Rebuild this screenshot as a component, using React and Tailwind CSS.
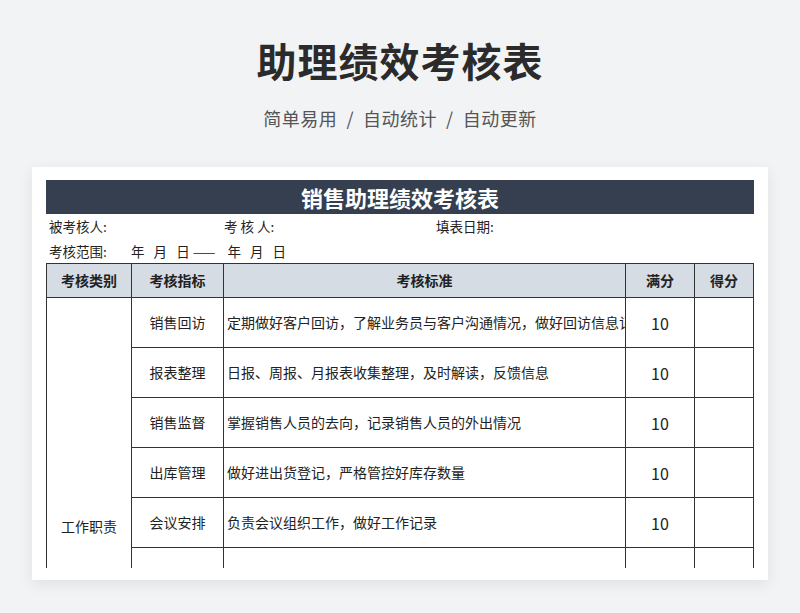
const FONT = { fontFamily: '"Noto Sans CJK SC", "Noto Sans", sans-serif' };

const rows = [
  ["销售回访", "定期做好客户回访，了解业务员与客户沟通情况，做好回访信息记录"],
  ["报表整理", "日报、周报、月报表收集整理，及时解读，反馈信息"],
  ["销售监督", "掌握销售人员的去向，记录销售人员的外出情况"],
  ["出库管理", "做好进出货登记，严格管控好库存数量"],
  ["会议安排", "负责会议组织工作，做好工作记录"],
  ["", ""],
];

export default function App() {
  return (
    <div className="w-[800px] h-[613px] bg-[#f2f3f5] flex flex-col items-center" style={FONT}>
      <h1 className="mt-[33px] text-[40px] leading-[54px] font-bold text-[#2b2b2b] tracking-[1px]">助理绩效考核表</h1>
      <p className="mt-[18px] text-[18px] leading-[26px] text-[#555] tracking-[0.5px]">
        简单易用 &nbsp;/&nbsp; 自动统计 &nbsp;/&nbsp; 自动更新
      </p>
      <div className="mt-[36px] w-[736px] h-[413px] bg-white shadow-[0_4px_14px_rgba(0,0,0,0.08)] px-[14px] pt-[13px]">
        <div className="h-[34px] bg-[#353f4f] flex items-center justify-center text-white text-[22px] font-bold">
          销售助理绩效考核表
        </div>
        <div className="flex text-[13.5px] text-[#222] h-[25px] items-center">
          <span className="w-[178px] pl-[3px]">被考核人:</span>
          <span className="w-[212px]">考 核 人:</span>
          <span>填表日期:</span>
        </div>
        <div className="flex text-[13.5px] text-[#222] h-[24px] items-center">
          <span className="w-[85px] pl-[3px]">考核范围:</span>
          <span className="whitespace-pre">{"年   月   日 ——    年   月   日"}</span>
        </div>
        <div className="h-[305px] overflow-hidden">
          <table className="border-collapse table-fixed w-[707px] text-[14px] text-[#222]">
            <colgroup>
              <col className="w-[85px]" />
              <col className="w-[92px]" />
              <col className="w-[402px]" />
              <col className="w-[69px]" />
              <col className="w-[59px]" />
            </colgroup>
            <thead>
              <tr className="h-[34px] bg-[#d6dce4] font-bold">
                {["考核类别", "考核指标", "考核标准", "满分", "得分"].map((h) => (
                  <th key={h} className="border border-[#333] text-center">{h}</th>
                ))}
              </tr>
            </thead>
            <tbody>
              {rows.map((r, i) => (
                <tr key={i} className="h-[50px]">
                  {i === 0 && (
                    <td rowSpan={6} className="border border-[#333] align-top text-center pt-[218px]">工作职责</td>
                  )}
                  <td className="border border-[#333] text-center">{r[0]}</td>
                  <td className="border border-[#333] px-[3px] whitespace-nowrap overflow-hidden">{r[1]}</td>
                  <td className="border border-[#333] text-center text-[16px]">{r[0] ? "10" : ""}</td>
                  <td className="border border-[#333]"></td>
                </tr>
              ))}
            </tbody>
          </table>
        </div>
      </div>
    </div>
  );
}
